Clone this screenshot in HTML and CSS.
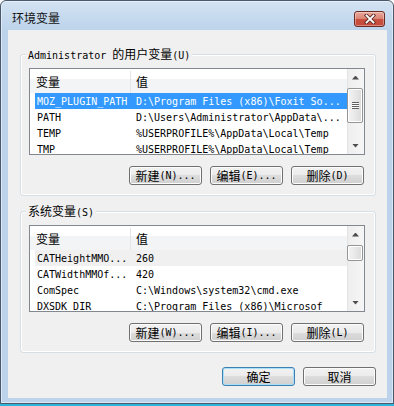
FILE: index.html
```html
<!DOCTYPE html>
<html lang="zh-CN">
<head>
    <meta charset="UTF-8">
    <title>环境变量</title>
    <link rel="stylesheet" href="styles.css">
</head>
<body>
<div class="window">
    <div class="titlebar">
        <span class="title zh">环境变量</span>
        <button class="close-btn" title="关闭">
            <svg width="12" height="10" viewBox="0 0 12 10">
                <path d="M2.5 1.5 L9.5 8.5 M9.5 1.5 L2.5 8.5" stroke="#5e2a24" stroke-width="3.6" stroke-linecap="square" fill="none"/>
                <path d="M2.5 1.5 L9.5 8.5 M9.5 1.5 L2.5 8.5" stroke="#ffffff" stroke-width="1.8" stroke-linecap="square" fill="none"/>
            </svg>
        </button>
    </div>

    <div class="client">
        <!-- User variables -->
        <div class="group">
            <span class="group-label">Administrator <span class="zh">的用户变量</span>(U)</span>
            <div class="listview">
                <div class="lv-body">
                    <div class="lv-header"><div class="h1"><span class="zh">变量</span></div><div class="h2"><span class="zh">值</span></div></div>
                    <div class="lv-row selected"><span class="c1">MOZ_PLUGIN_PATH</span><span class="c2">D:\Program Files (x86)\Foxit So...</span></div>
                    <div class="lv-row"><span class="c1">PATH</span><span class="c2">D:\Users\Administrator\AppData\...</span></div>
                    <div class="lv-row"><span class="c1">TEMP</span><span class="c2">%USERPROFILE%\AppData\Local\Temp</span></div>
                    <div class="lv-row"><span class="c1">TMP</span><span class="c2">%USERPROFILE%\AppData\Local\Temp</span></div>
                </div>
                <div class="scrollbar">
                    <div class="sb-arrow up"></div>
                    <div class="sb-track"><div class="sb-thumb large"></div></div>
                    <div class="sb-arrow down"></div>
                </div>
            </div>
            <div class="btn-row">
                <button class="btn"><span class="zh">新建</span>(N)...</button>
                <button class="btn"><span class="zh">编辑</span>(E)...</button>
                <button class="btn"><span class="zh">删除</span>(D)</button>
            </div>
        </div>

        <!-- System variables -->
        <div class="group">
            <span class="group-label"><span class="zh">系统变量</span>(S)</span>
            <div class="listview">
                <div class="lv-body">
                    <div class="lv-header"><div class="h1"><span class="zh">变量</span></div><div class="h2"><span class="zh">值</span></div></div>
                    <div class="lv-row inactive"><span class="c1">CATHeightMMO...</span><span class="c2">260</span></div>
                    <div class="lv-row"><span class="c1">CATWidthMMOf...</span><span class="c2">420</span></div>
                    <div class="lv-row"><span class="c1">ComSpec</span><span class="c2">C:\Windows\system32\cmd.exe</span></div>
                    <div class="lv-row"><span class="c1">DXSDK_DIR</span><span class="c2">C:\Program Files (x86)\Microsof</span></div>
                </div>
                <div class="scrollbar">
                    <div class="sb-arrow up"></div>
                    <div class="sb-track"><div class="sb-thumb small"></div></div>
                    <div class="sb-arrow down"></div>
                </div>
            </div>
            <div class="btn-row">
                <button class="btn"><span class="zh">新建</span>(W)...</button>
                <button class="btn"><span class="zh">编辑</span>(I)...</button>
                <button class="btn"><span class="zh">删除</span>(L)</button>
            </div>
        </div>

        <div class="dialog-buttons">
            <button class="btn default"><span class="zh">确定</span></button>
            <button class="btn"><span class="zh">取消</span></button>
        </div>
    </div>
</div>
</body>
</html>
```

FILE: styles.css
```css
/* Basic reset */
* {
    box-sizing: border-box;
    margin: 0;
    padding: 0;
}
html, body {
    width: 394px;
    height: 406px;
    overflow: hidden;
}
body {
    background: linear-gradient(#ffffff 0 200px, #2fb4d9 200px);
    font: 10px "DejaVu Sans Mono", "Noto Sans CJK SC", monospace;
    color: #000;
}
.zh {
    font-family: "Noto Sans CJK SC", sans-serif;
    font-size: 12px;
}

/* Window frame */
.window {
    width: 394px;
    height: 404px;
    border: 1px solid #4a596b;
    border-radius: 6px 6px 0 0;
    background: linear-gradient(#d3e2f2, #bcd3eb 30px, #bcd3eb);
    box-shadow: inset 0 0 0 1px rgba(255, 255, 255, 0.45);
    padding: 0 6px 5px 7px;
}
.titlebar {
    display: flex;
    justify-content: space-between;
    height: 29px;
}
.title {
    margin: 9px 0 0 4px;
    line-height: 16px;
    color: #111;
}
.close-btn {
    width: 31px;
    height: 16px;
    margin: 10px 2px 0 0;
    border: 1px solid #6b2a22;
    border-radius: 3px;
    background: linear-gradient(#eba99b, #d98373 50%, #c9503f 50%, #c4493a);
    box-shadow: inset 0 0 0 1px rgba(255, 255, 255, 0.35);
    display: flex;
    align-items: center;
    justify-content: center;
}
.client {
    height: 368px;
    background: #f0f0f0;
    padding-top: 24px;
}

/* Group boxes */
.group {
    position: relative;
    width: 356px;
    margin-left: 12px;
    border: 1px solid #d5dfe5;
    border-radius: 3px;
    box-shadow: inset 0 0 0 1px #ffffff;
    padding: 13px 10px 10px 8px;
}
.group + .group {
    margin-top: 15px;
}
.group-label {
    position: absolute;
    top: -9px;
    left: 5px;
    padding: 0 2px;
    line-height: 16px;
    background: #f0f0f0;
    white-space: nowrap;
}

/* List view */
.listview {
    display: flex;
    height: 87px;
    border: 1px solid #828790;
    background: #fff;
}
.lv-body {
    flex: 1;
    min-width: 0;
    overflow: hidden;
}
.lv-header {
    display: flex;
    height: 24px;
    line-height: 22px;
    padding-top: 2px;
    background: linear-gradient(#ffffff 0 10px, #f3f4f6 10px);
}
.lv-header .h1 {
    width: 100px;
    padding-left: 6px;
    box-shadow: 1px 0 0 #e3e5e7;
}
.lv-header .h2 {
    padding-left: 6px;
}
.lv-row {
    display: flex;
    height: 16px;
    line-height: 16px;
    padding-top: 1px;
    margin-left: 5px;
    white-space: nowrap;
}
.lv-row .c1 {
    width: 95px;
    padding-left: 2px;
    overflow: hidden;
}
.lv-row .c2 {
    padding-left: 6px;
}
.lv-row.selected {
    background: #3399ff;
    color: #fff;
}
.lv-row.inactive {
    background: #f0f0f0;
}

/* Scroll bar */
.scrollbar {
    width: 17px;
    display: flex;
    flex-direction: column;
    background: linear-gradient(to right, #e3e3e3 0 1px, #eeeeee 1px, #f6f6f6);
}
.sb-arrow {
    height: 17px;
    display: flex;
    align-items: center;
    justify-content: center;
}
.sb-arrow::before {
    content: "";
    width: 7px;
    height: 4px;
    background: #4d4d4d;
}
.sb-arrow.up::before {
    clip-path: polygon(50% 0, 100% 100%, 0 100%);
}
.sb-arrow.down::before {
    clip-path: polygon(0 0, 100% 0, 50% 100%);
}
.sb-track {
    flex: 1;
}
.sb-thumb {
    margin: 2px 1px 0 0;
    border: 1px solid #959595;
    border-radius: 2px;
    background: linear-gradient(to right, #f4f4f4, #e8e8e8 50%, #dadada);
    box-shadow: inset 0 0 0 1px #ffffff;
    display: flex;
    align-items: center;
    justify-content: center;
}
.sb-thumb.large {
    height: 35px;
}
.sb-thumb.small {
    height: 16px;
}
.sb-thumb.large::before {
    content: "";
    width: 7px;
    height: 7px;
    background: repeating-linear-gradient(#606060 0 1px, #fafafa 1px 2px);
}

/* Buttons */
.btn-row, .dialog-buttons {
    display: flex;
    justify-content: flex-end;
    gap: 8px;
}
.btn-row {
    margin-top: 11px;
    padding-right: 1px;
}
.dialog-buttons {
    margin-top: 14px;
    padding-right: 11px;
}
.btn {
    width: 73px;
    height: 19px;
    border: 1px solid #707070;
    border-radius: 3px;
    background: linear-gradient(#f2f2f2, #ebebeb 50%, #dddddd 50%, #cfcfcf);
    box-shadow: inset 0 0 0 1px #fcfcfc;
    font: inherit;
    color: #000;
    display: flex;
    align-items: center;
    justify-content: center;
    white-space: nowrap;
}
.btn.default {
    border-color: #3c7fb1;
    box-shadow: inset 0 0 0 1px #a9e0f7;
}
```
